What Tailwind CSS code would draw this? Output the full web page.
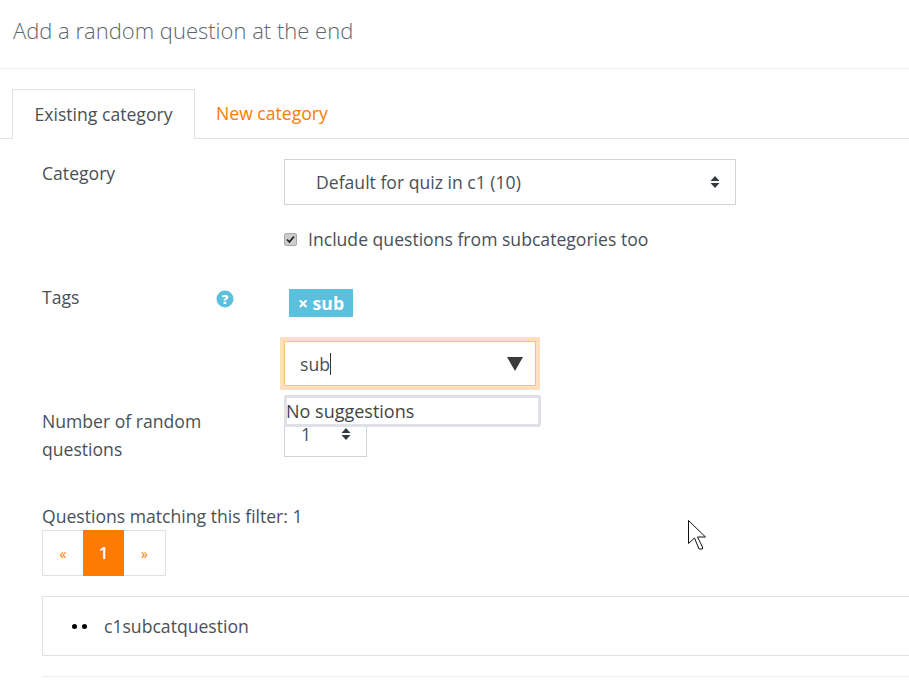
<!DOCTYPE html>
<html lang="en">
<head>
  <meta charset="UTF-8" />
  <title>Add a random question</title>
  <script src="https://cdn.jsdelivr.net/npm/@tailwindcss/browser@4"></script>
</head>
<body class="bg-white w-[909px] h-[685px] overflow-hidden font-['Open_Sans',sans-serif] text-[17.6px] text-[#495057]">
  <div class="h-[69px] border-b border-[#e9ecef] pl-[13px] pt-[15px]">
    <h1 class="text-[22px] leading-[30px] font-light text-[#5f666c]">Add a random question at the end</h1>
  </div>

  <div class="mt-[20px] pl-[12px] flex h-[50px] border-b border-[#dee2e6]">
    <div class="w-[183px] h-[50px] border border-b-0 border-[#dee2e6] bg-white flex items-center justify-center">Existing category</div>
    <div class="pl-[21px] flex items-center text-[#ff7a00]">New category</div>
  </div>

  <div class="relative pl-[42px] pt-[20px]">
    <div class="flex h-[46px]">
      <div class="w-[242px] leading-[28px]">Category</div>
      <div class="w-[452px] h-[46px] border border-[#ced4da] flex items-center justify-between pl-[31px] pr-[15px]">
        <span>Default for quiz in c1 (10)</span>
        <svg width="10" height="14" viewBox="0 0 10 14"><path d="M5 1 9.5 6H.5zM5 13 .5 8h9z" fill="#343a40"/></svg>
      </div>
    </div>

    <div class="flex items-center h-[28px] mt-[20px] pl-[242px]">
      <span class="w-[13px] h-[13px] rounded-[2px] bg-[#cdcdcd] border border-[#a8a8a8] flex items-center justify-center">
        <svg width="9" height="9" viewBox="0 0 9 9"><path d="M1 4.5 3.4 7 8 1.5" fill="none" stroke="#222" stroke-width="1.8"/></svg>
      </span>
      <span class="ml-[11px]">Include questions from subcategories too</span>
    </div>

    <div class="flex mt-[37px] h-[38px]">
      <div class="w-[174px] leading-[28px] mt-[-7px]">Tags</div>
      <div class="w-[68px]">
        <svg width="18" height="18" viewBox="0 0 18 18"><circle cx="9" cy="9" r="8.5" fill="#5bc0de"/><text x="9" y="13.5" text-anchor="middle" font-family="Open Sans" font-weight="800" font-size="13" fill="#fff">?</text></svg>
      </div>
      <div class="ml-[5px] h-[28px] w-[64px] mt-[-1px] bg-[#5bc0de] text-white font-bold flex items-center justify-center whitespace-nowrap">× sub</div>
    </div>

    <div class="ml-[242px] mt-[13px] w-[252px] h-[45px] border border-[#ffbf80] shadow-[0_0_0_4px_#ffdfc0] flex items-center justify-between pl-[15px] pr-[12px]">
      <span class="border-r border-[#333] leading-[22px]">sub</span>
      <svg width="16" height="14" viewBox="0 0 16 14"><path d="M0 0h16L8 14z" fill="#3a3a3a"/></svg>
    </div>

    <div class="flex mt-[21px]">
      <div class="w-[242px] leading-[28px]">Number of random<br />questions</div>
      <div class="w-[83px] h-[46px] mt-[4px] border border-[#ced4da] flex items-center justify-between pl-[16px] pr-[15px]">
        <span>1</span>
        <svg width="10" height="14" viewBox="0 0 10 14"><path d="M5 1 9.5 6H.5zM5 13 .5 8h9z" fill="#343a40"/></svg>
      </div>
    </div>

    <div class="absolute left-[284px] top-[256px] w-[257px] h-[32px] bg-white border-[3px] border-[#dee2e6] rounded-[2px] leading-[26px] text-[18px] text-[#444]"><span class="-ml-px">No suggestions</span></div>

    <div class="mt-[39px] leading-[28px]">Questions matching this filter: 1</div>
    <div class="flex w-[124px] h-[46px] border border-[#dee2e6] text-[14px] text-[#ff7a00]">
      <div class="w-[40px] flex items-center justify-center">«</div>
      <div class="w-[41px] -my-px bg-[#ff7a00] text-white text-[17px] font-semibold flex items-center justify-center">1</div>
      <div class="flex-1 flex items-center justify-center">»</div>
    </div>

    <div class="mt-[20px] h-[60px] border border-r-0 border-[#dee2e6] flex items-center pl-[29px]">
      <span class="w-[5px] h-[5px] rounded-full bg-black"></span>
      <span class="w-[5px] h-[5px] rounded-full bg-black ml-[5px]"></span>
      <span class="ml-[17px]">c1subcatquestion</span>
    </div>
    <div class="mt-[20px] border-t border-[#e9ecef]"></div>

    <svg class="absolute left-[688px] top-[381px]" width="20" height="32" viewBox="0 0 20 32"><path d="M.5.5v23l6-5.5 4.5 11h3.5v-2L9.500 17h8z" fill="#fff" stroke="#111" stroke-width="1"/></svg>
  </div>
</body>
</html>
